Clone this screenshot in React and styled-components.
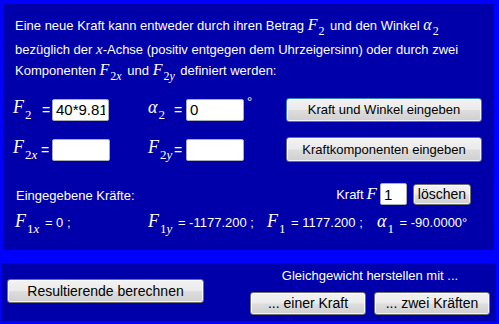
import React from "react";
import styled, { createGlobalStyle } from "styled-components";

const GlobalStyle = createGlobalStyle`
  html, body {
    margin: 0;
    padding: 0;
    background: #0000ff;
  }
  body {
    font-family: "Liberation Sans", Arial, sans-serif;
    color: #ffffff;
  }
`;

const Page = styled.div`
  width: 499px;
  height: 324px;
  display: flex;
  flex-direction: column;
  overflow: hidden;
`;

const MainPanel = styled.div`
  margin: 4px 5px 0 3px;
  height: 246px;
  background: #0000aa;
  box-sizing: border-box;
  padding-top: 10px;
  display: flex;
  flex-direction: column;
`;

const BottomPanel = styled.div`
  margin: 13px 3px 0 2px;
  height: 58px;
  background: #0000aa;
  box-sizing: border-box;
  padding: 0 6px 2px 5px;
  display: flex;
  align-items: center;
  justify-content: space-between;
`;

const IntroLine = styled.div`
  padding-left: 12px;
  height: ${(p) => p.$h}px;
  line-height: ${(p) => p.$h}px;
  font-size: 13px;
  white-space: nowrap;
`;

const Var = styled.span`
  font-family: "Liberation Serif", "Times New Roman", serif;
  font-style: italic;
  font-size: ${(p) => p.$size || 18}px;
  line-height: 0;
`;

const Sub = styled.sub`
  font-family: "Liberation Serif", "Times New Roman", serif;
  font-style: normal;
  font-size: ${(p) => p.$size || 13}px;
  line-height: 0;
  vertical-align: ${(p) => p.$drop || -6}px;
  margin-left: 1px;
  margin-right: 2px;

  i {
    font-style: italic;
  }
`;

const FormGrid = styled.div`
  margin-top: 16px;
  padding-left: 10px;
  display: grid;
  grid-template-columns: 28px 11px 57px 39px 26px 12px 58px 42px 196px;
  grid-template-rows: 25px 25px;
  row-gap: 15px;
  align-items: center;
`;

const Label = styled.div`
  white-space: nowrap;
  padding-bottom: 4px;
`;

const Eq = styled.div`
  font-size: 14px;
  padding-left: ${(p) => p.$pl || 0}px;
`;

const Field = styled.input`
  box-sizing: border-box;
  width: ${(p) => p.$w}px;
  height: 22px;
  border: 1px solid #abadb3;
  border-radius: 2px;
  background: #ffffff;
  color: #000000;
  font-family: "Liberation Sans", Arial, sans-serif;
  font-size: 15px;
  padding: 0 3px;
  margin: 0;
  outline: none;
`;

const Degree = styled.div`
  align-self: start;
  padding-left: 3px;
  font-size: 13px;
  line-height: 10px;
`;

const Button = styled.button`
  box-sizing: border-box;
  width: ${(p) => p.$w}px;
  height: ${(p) => p.$h || 24}px;
  margin: 0;
  padding: 0;
  border: 1px solid ${(p) => (p.$focus ? "#3c7fb1" : "#707070")};
  border-radius: 3px;
  background: linear-gradient(
    #f2f2f2 0%,
    #ebebeb 48%,
    #dddddd 52%,
    #cfcfcf 100%
  );
  box-shadow: inset 0 0 0 1px rgba(255, 255, 255, 0.75);
  color: #000000;
  font-family: "Liberation Sans", Arial, sans-serif;
  font-size: ${(p) => p.$fs || 13}px;
  cursor: pointer;
`;

const EntryRow = styled.div`
  margin-top: 21px;
  height: 22px;
  display: flex;
  align-items: center;
  padding: 0 23px 0 13px;
  font-size: 13px;
`;

const EntryTitle = styled.div`
  padding-top: 3px;
`;

const KraftPick = styled.div`
  margin-left: auto;
  display: flex;
  align-items: center;
  gap: 6px;
  white-space: nowrap;
`;

const KraftLabel = styled.div`
  display: flex;
  align-items: center;
  gap: 3px;
`;

const ResultRow = styled.div`
  margin-top: 5px;
  padding-left: 12px;
  height: 24px;
  display: flex;
  align-items: center;
  font-size: 13px;
  white-space: nowrap;
`;

const ResultItem = styled.div`
  width: ${(p) => p.$w}px;
  flex: none;
`;

const EquilibriumBox = styled.div`
  display: flex;
  flex-direction: column;
  align-items: center;
  gap: 9px;
`;

const EquilibriumText = styled.div`
  font-size: 13px;
`;

const ButtonPair = styled.div`
  display: flex;
  gap: 8px;
`;

function F({ sub, size, subSize, drop }) {
  return (
    <>
      <Var $size={size}>F</Var>
      <Sub $size={subSize} $drop={drop}>{sub}</Sub>
    </>
  );
}

export default function App() {
  return (
    <Page>
      <GlobalStyle />
      <MainPanel>
        <IntroLine $h={24}>
          Eine neue Kraft kann entweder durch ihren Betrag{" "}
          <F sub="2" size={16} subSize={12} drop={-5} /> und den Winkel{" "}
          <Var $size={16}>α</Var>
          <Sub $size={12} $drop={-5}>2</Sub>
        </IntroLine>
        <IntroLine $h={23}>
          bezüglich der <Var $size={15}>x</Var>-Achse (positiv entgegen dem
          Uhrzeigersinn) oder durch zwei
        </IntroLine>
        <IntroLine $h={20}>
          Komponenten{" "}
          <F sub={<>2<i>x</i></>} size={16} subSize={12} drop={-5} /> und{" "}
          <F sub={<>2<i>y</i></>} size={16} subSize={12} drop={-5} />{" "}
          definiert werden:
        </IntroLine>

        <FormGrid>
          <Label>
            <F sub="2" />
          </Label>
          <Eq $pl={1}>=</Eq>
          <Field $w={57} defaultValue="40*9.81" />
          <div />
          <Label>
            <Var>α</Var>
            <Sub>2</Sub>
          </Label>
          <Eq>=</Eq>
          <Field $w={58} defaultValue="0" />
          <Degree>°</Degree>
          <Button $w={196} $h={24} $focus>
            Kraft und Winkel eingeben
          </Button>

          <Label>
            <F sub={<>2<i>x</i></>} />
          </Label>
          <Eq>=</Eq>
          <Field $w={58} />
          <div />
          <Label>
            <F sub={<>2<i>y</i></>} />
          </Label>
          <Eq>=</Eq>
          <Field $w={58} />
          <div />
          <Button $w={196} $h={25}>
            Kraftkomponenten eingeben
          </Button>
        </FormGrid>

        <EntryRow>
          <EntryTitle>Eingegebene Kräfte:</EntryTitle>
          <KraftPick>
            <KraftLabel>
              Kraft <Var $size={17}>F</Var>
              <Field $w={27} defaultValue="1" />
            </KraftLabel>
            <Button $w={58} $h={21} $fs={14}>
              löschen
            </Button>
          </KraftPick>
        </EntryRow>

        <ResultRow>
          <ResultItem $w={133}>
            <F sub={<>1<i>x</i></>} /> = 0 ;
          </ResultItem>
          <ResultItem $w={119}>
            <F sub={<>1<i>y</i></>} /> = -1177.200 ;
          </ResultItem>
          <ResultItem $w={110}>
            <F sub="1" /> = 1177.200 ;
          </ResultItem>
          <ResultItem $w={100}>
            <Var>α</Var>
            <Sub>1</Sub> = -90.0000°
          </ResultItem>
        </ResultRow>
      </MainPanel>

      <BottomPanel>
        <Button $w={197} $h={24} $fs={14}>
          Resultierende berechnen
        </Button>
        <EquilibriumBox>
          <EquilibriumText>Gleichgewicht herstellen mit ...</EquilibriumText>
          <ButtonPair>
            <Button $w={116} $h={23} $fs={14}>
              ... einer Kraft
            </Button>
            <Button $w={116} $h={23} $fs={14}>
              ... zwei Kräften
            </Button>
          </ButtonPair>
        </EquilibriumBox>
      </BottomPanel>
    </Page>
  );
}
